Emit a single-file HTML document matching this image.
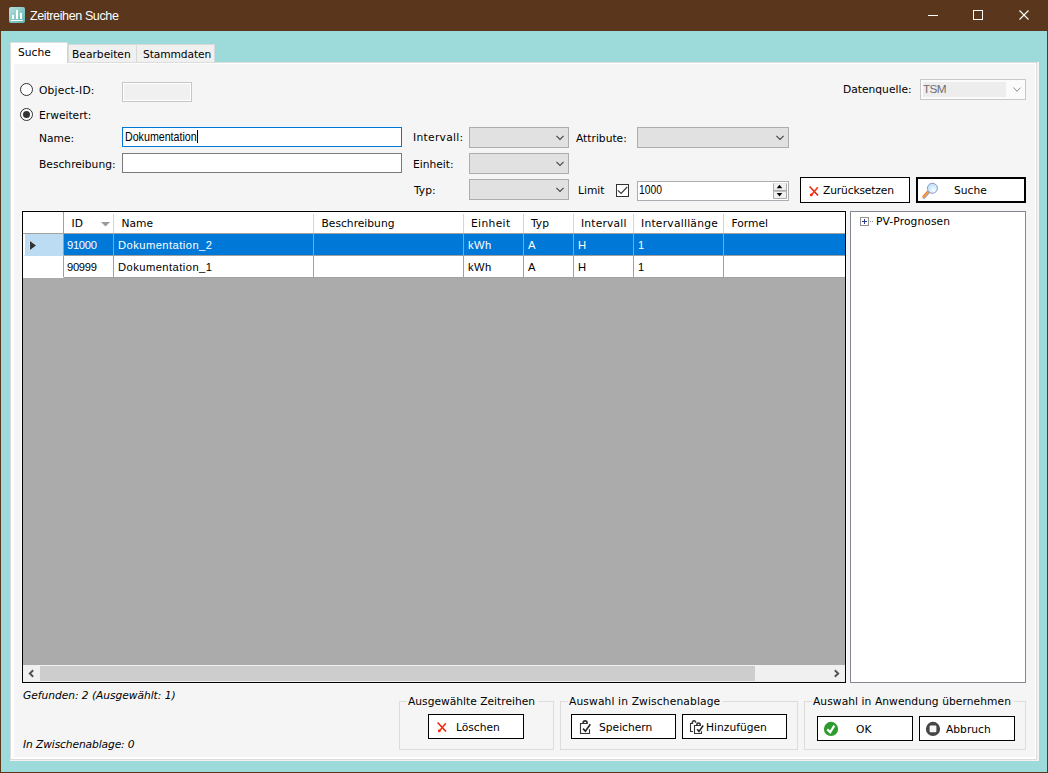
<!DOCTYPE html>
<html lang="de">
<head>
<meta charset="utf-8">
<title>Zeitreihen Suche</title>
<style>
html,body{margin:0;padding:0;}
body{width:1048px;height:773px;overflow:hidden;position:relative;background:#9ddada;
  font-family:"DejaVu Sans","Liberation Sans",sans-serif;font-size:10.7px;color:#000;}
.abs,.abs *{position:absolute;box-sizing:border-box;}
.abs{left:0;top:0;}
.t{white-space:nowrap;line-height:14px;height:14px;}
.seg{font-family:"Liberation Sans",sans-serif;}
/* window frame */
#frame{left:0;top:0;width:1048px;height:773px;border:1px solid #5a361c;border-top:none;}
#title{left:0;top:0;width:1048px;height:31px;background:#5a361c;}
#title .cap{left:30px;top:8px;color:#fff;font-size:12.6px;letter-spacing:-0.42px;line-height:17px;height:17px;}
/* tab control */
#tabpage{left:10px;top:62px;width:1029px;height:699px;background:#f4f2f2;}
#tabmid{left:10px;top:62px;width:1027px;height:698px;background:#dcdcdc;}
#tabwhite{left:11px;top:63px;width:1025px;height:696px;background:#fff;}
#tabinner{left:14px;top:64px;width:1021px;height:693px;background:#f5f5f5;}
#frame2{left:1px;top:31px;width:1046px;height:741px;border:1px solid #a6e6e6;border-top:none;}
.tab{background:#f0f0f0;border:1px solid #d9d9d9;border-bottom:none;}
.tabsel{background:#fff;}
/* inputs */
.combo{background:#e1e1e1;border:1px solid #adadad;}
.btn{background:#fff;border:1px solid #000;}
.grp{border:1px solid #dcdcdc;}
.grp .cap{background:#f5f5f5;top:-7px;padding:0 3px 0 1px;}
/* grid */
#grid{left:22px;top:211px;width:824px;height:472px;background:#ababab;border:1px solid #000;box-shadow:0 0 0 1px #fbfbfb;}
.hc{top:0;height:22px;background:#fff;border-bottom:1px solid #a6a19c;}
.hc::after{content:"";position:absolute;right:0;top:2px;width:1px;height:19px;background:#d6d6d6;}
.hc.rh{border-right:1px solid #a0a0a0;}
.hc.rh::after,.hc.last::after{display:none;}
.c{height:22px;background:#fff;border-right:1px solid #a0a0a0;border-bottom:1px solid #a0a0a0;}
.r1{top:22px;}
.r2{top:44px;}
.sel{background:#0078d7;color:#fff;}
.c .t{top:4px;left:4px;font-family:"Liberation Sans",sans-serif;font-size:11.2px;letter-spacing:0.45px;}
.hc .t{top:5px;left:7.5px;}
</style>
</head>
<body>
<div class="abs">
  <div id="frame"></div>
  <div id="title">
    <svg style="left:9px;top:7px" width="16" height="16" viewBox="0 0 16 16">
      <defs><linearGradient id="ig" x1="0" y1="0" x2="1" y2="1"><stop offset="0" stop-color="#b5e0de"/><stop offset="1" stop-color="#5db5b3"/></linearGradient></defs>
      <rect x="0" y="0" width="16" height="16" rx="2" fill="url(#ig)"/>
      <rect x="3" y="8" width="2" height="4" fill="#fff"/>
      <rect x="7" y="3" width="2" height="9" fill="#fff"/>
      <rect x="11" y="6" width="2" height="6" fill="#fff"/>
      <rect x="2" y="13" width="12" height="1" fill="#fff"/>
    </svg>
    <div class="t cap seg">Zeitreihen Suche</div>
    <svg style="left:927px;top:10px" width="110" height="12" viewBox="0 0 110 12">
      <rect x="1" y="5" width="10" height="1" fill="#fff"/>
      <rect x="46.5" y="0.5" width="9" height="9" fill="none" stroke="#fff" stroke-width="1"/>
      <path d="M92.5 0.5 L101.5 9.5 M101.5 0.5 L92.5 9.5" stroke="#fff" stroke-width="1.1" fill="none"/>
    </svg>
  </div>

  <!-- tab control -->
  <div id="tabpage"></div>
  <div id="tabmid"></div>
  <div id="tabwhite"></div>
  <div id="tabinner"></div>
  <div class="tab" style="left:68px;top:44px;width:69px;height:18px;"></div>
  <div class="tab" style="left:136px;top:44px;width:79px;height:18px;"></div>
  <div class="tab tabsel" style="left:10px;top:42px;width:58px;height:21px;border-color:#dedede #d4d4d4 #fff #dcdcdc;"></div>
  <div class="t" style="left:18px;top:46px;">Suche</div>
  <div class="t" style="left:72px;top:48px;">Bearbeiten</div>
  <div class="t" style="left:143px;top:48px;letter-spacing:-0.1px;">Stammdaten</div>

  <!-- radio buttons -->
  <svg style="left:20px;top:83px" width="13" height="13" viewBox="0 0 13 13"><circle cx="6.5" cy="6.5" r="6" fill="#fff" stroke="#333" stroke-width="1"/></svg>
  <svg style="left:20px;top:108px" width="13" height="13" viewBox="0 0 13 13"><circle cx="6.5" cy="6.5" r="6" fill="#fff" stroke="#333" stroke-width="1"/><circle cx="6.5" cy="6.5" r="3.5" fill="#333"/></svg>
  <div class="t" style="left:39px;top:84px;letter-spacing:0.2px;">Object-ID:</div>
  <div class="t" style="left:39px;top:109px;">Erweitert:</div>
  <div style="left:122px;top:82px;width:70px;height:20px;background:#f0f0f0;border:1px solid #c6c6c6;box-shadow:inset 0 0 0 1px #fff;"></div>

  <div class="t" style="left:39px;top:132px;">Name:</div>
  <div style="left:122px;top:127px;width:280px;height:20px;background:#fff;border:1px solid #0078d7;"></div>
  <div class="t seg" style="left:125px;top:130px;font-size:12.4px;transform:scaleX(0.86);transform-origin:0 0;">Dokumentation</div>
  <div style="left:197px;top:130px;width:1px;height:13px;background:#000;"></div>
  <div class="t" style="left:39px;top:158px;">Beschreibung:</div>
  <div style="left:122px;top:153px;width:280px;height:20px;background:#fff;border:1px solid #7a7a7a;"></div>

  <div class="t" style="left:413px;top:131px;letter-spacing:0.3px;">Intervall:</div>
  <div class="t" style="left:413px;top:158px;">Einheit:</div>
  <div class="t" style="left:414px;top:184px;">Typ:</div>
  <div class="combo" style="left:469px;top:127px;width:100px;height:21px;"></div>
  <div class="combo" style="left:469px;top:153px;width:100px;height:21px;"></div>
  <div class="combo" style="left:469px;top:179px;width:100px;height:21px;"></div>
  <svg style="left:555px;top:135px" width="10" height="6" viewBox="0 0 10 6"><path d="M1.4 0.8 L5 4.4 L8.6 0.8" fill="none" stroke="#444" stroke-width="1.12"/></svg>
  <svg style="left:555px;top:161px" width="10" height="6" viewBox="0 0 10 6"><path d="M1.4 0.8 L5 4.4 L8.6 0.8" fill="none" stroke="#444" stroke-width="1.12"/></svg>
  <svg style="left:555px;top:187px" width="10" height="6" viewBox="0 0 10 6"><path d="M1.4 0.8 L5 4.4 L8.6 0.8" fill="none" stroke="#444" stroke-width="1.12"/></svg>

  <div class="t" style="left:576px;top:132px;">Attribute:</div>
  <div class="combo" style="left:637px;top:127px;width:152px;height:21px;"></div>
  <svg style="left:775px;top:135px" width="10" height="6" viewBox="0 0 10 6"><path d="M1.4 0.8 L5 4.4 L8.6 0.8" fill="none" stroke="#444" stroke-width="1.12"/></svg>

  <div class="t" style="left:578px;top:184px;">Limit</div>
  <div style="left:616px;top:184px;width:13px;height:13px;background:#fff;border:1px solid #333;"></div>
  <svg style="left:616px;top:184px" width="13" height="13" viewBox="0 0 13 13"><path d="M1.8 6.3 L5.1 9.5 L11.2 3" fill="none" stroke="#3a3a3a" stroke-width="1.15"/></svg>
  <div style="left:637px;top:181px;width:152px;height:20px;background:#fff;border:1px solid #abadb3;"></div>
  <div class="t seg" style="left:639px;top:183px;font-size:12.4px;transform:scaleX(0.83);transform-origin:0 0;">1000</div>
  <div style="left:773px;top:183px;width:14px;height:8px;background:#f0f0f0;border:1px solid #adadad;border-top-color:#e8e8e8;"></div>
  <div style="left:773px;top:191px;width:14px;height:8px;background:#f0f0f0;border:1px solid #adadad;border-top-color:#c0c0c0;"></div>
  <svg style="left:776px;top:184px" width="8" height="14" viewBox="0 0 8 14"><path d="M0.7 4.2 L3.5 0.8 L6.3 4.2 Z M0.7 9 L6.3 9 L3.5 12.4 Z" fill="#000"/></svg>

  <div class="t" style="left:843px;top:83px;">Datenquelle:</div>
  <div style="left:920px;top:79px;width:106px;height:21px;background:#fbfbfb;border:1px solid #c8c8c8;"></div>
  <div style="left:923px;top:82px;width:83px;height:15px;background:#ededed;"></div>
  <div class="t seg" style="left:923px;top:82px;font-size:11.8px;color:#6d6d6d;letter-spacing:-0.6px;">TSM</div>
  <svg style="left:1012px;top:87px" width="10" height="6" viewBox="0 0 10 6"><path d="M1.4 0.6 L5 4.2 L8.6 0.6" fill="none" stroke="#888" stroke-width="1"/></svg>

  <!-- buttons top -->
  <div class="btn" style="left:800px;top:177px;width:110px;height:26px;"></div>
  <svg style="left:809px;top:186px" width="10" height="11" viewBox="0 0 10 11"><path d="M0.6 0.6 L9 9.6" stroke="#e0200a" stroke-width="1.5" fill="none"/><path d="M8.8 1.3 L2.2 9.2" stroke="#ff3414" stroke-width="1.7" fill="none"/><circle cx="2.3" cy="8.9" r="1.35" fill="#ff2200"/></svg>
  <div class="t" style="left:823px;top:184px;letter-spacing:-0.15px;">Zurücksetzen</div>
  <div class="btn" style="left:916px;top:177px;width:110px;height:26px;border-width:2px;"></div>
  <svg style="left:921px;top:181px" width="18" height="18" viewBox="0 0 18 18">
    <defs><radialGradient id="lens" cx="0.62" cy="0.68" r="0.7"><stop offset="0" stop-color="#ffffff"/><stop offset="0.45" stop-color="#d8effd"/><stop offset="1" stop-color="#bfe0f8"/></radialGradient></defs>
    <path d="M2.9 16.6 L8.1 10.9" stroke="#9a98c8" stroke-width="2.6" stroke-linecap="round"/>
    <path d="M2.3 15.9 L7.5 10.2" stroke="#f5a22e" stroke-width="2.2" stroke-linecap="round"/>
    <path d="M1.8 15.2 L6.8 9.8" stroke="#ee6a4a" stroke-width="0.9"/>
    <circle cx="11.4" cy="7.3" r="5" fill="url(#lens)" stroke="#8f96c6" stroke-width="1"/>
  </svg>
  <div class="t" style="left:954px;top:184px;">Suche</div>

  <!-- data grid -->
  <div id="grid">
    <div class="hc rh" style="left:0;width:41px;"></div>
    <div class="hc" style="left:41px;width:50px;"><div class="t">ID</div></div>
    <div class="hc" style="left:91px;width:200px;"><div class="t">Name</div></div>
    <div class="hc" style="left:291px;width:150px;"><div class="t">Beschreibung</div></div>
    <div class="hc" style="left:441px;width:60px;"><div class="t" style="left:7px;letter-spacing:0.35px;">Einheit</div></div>
    <div class="hc" style="left:501px;width:50px;"><div class="t" style="left:7px;">Typ</div></div>
    <div class="hc" style="left:551px;width:60px;"><div class="t" style="left:7px;letter-spacing:0.2px;">Intervall</div></div>
    <div class="hc" style="left:611px;width:90px;"><div class="t" style="left:7px;letter-spacing:0.25px;">Intervalllänge</div></div>
    <div class="hc last" style="left:701px;width:121px;"><div class="t">Formel</div></div>
    <svg style="left:78px;top:10px" width="9" height="5" viewBox="0 0 9 5"><path d="M0 0 L9 0 L4.5 4.5 Z" fill="#9a9a9a"/></svg>

    <div class="c r1" style="left:0;width:41px;background:#bcdcf4;border-left:2px solid #fff;border-bottom-color:#bcdcf4;"></div>
    <svg style="left:6px;top:28px" width="8" height="11" viewBox="0 0 8 11"><path d="M1 1 L7 5.5 L1 10 Z" fill="#333" stroke="#e6f2fb" stroke-width="1" paint-order="stroke"/></svg>
    <div class="c r1 sel" style="left:41px;width:50px;"><div class="t" style="left:3px;letter-spacing:-0.3px;">91000</div></div>
    <div class="c r1 sel" style="left:91px;width:200px;"><div class="t">Dokumentation_2</div></div>
    <div class="c r1 sel" style="left:291px;width:150px;"></div>
    <div class="c r1 sel" style="left:441px;width:60px;"><div class="t">kWh</div></div>
    <div class="c r1 sel" style="left:501px;width:50px;"><div class="t">A</div></div>
    <div class="c r1 sel" style="left:551px;width:60px;"><div class="t">H</div></div>
    <div class="c r1 sel" style="left:611px;width:90px;"><div class="t">1</div></div>
    <div class="c r1 sel" style="left:701px;width:121px;border-right:none;"></div>

    <div class="c r2" style="left:0;width:41px;border-bottom-color:#fff;"></div>
    <div class="c r2" style="left:41px;width:50px;"><div class="t" style="left:3px;letter-spacing:-0.3px;">90999</div></div>
    <div class="c r2" style="left:91px;width:200px;"><div class="t">Dokumentation_1</div></div>
    <div class="c r2" style="left:291px;width:150px;"></div>
    <div class="c r2" style="left:441px;width:60px;"><div class="t">kWh</div></div>
    <div class="c r2" style="left:501px;width:50px;"><div class="t">A</div></div>
    <div class="c r2" style="left:551px;width:60px;"><div class="t">H</div></div>
    <div class="c r2" style="left:611px;width:90px;"><div class="t">1</div></div>
    <div class="c r2" style="left:701px;width:121px;border-right:none;"></div>

    <!-- horizontal scrollbar -->
    <div style="left:0;top:453px;width:822px;height:17px;background:#f0f0f0;"></div>
    <div style="left:17px;top:454px;width:715px;height:15px;background:#cdcdcd;"></div>
    <svg style="left:5px;top:457px" width="7" height="9" viewBox="0 0 7 9"><path d="M5.2 1.2 L1.8 4.5 L5.2 7.8" fill="none" stroke="#505050" stroke-width="1.9"/></svg>
    <svg style="left:810px;top:457px" width="7" height="9" viewBox="0 0 7 9"><path d="M1.8 1.2 L5.2 4.5 L1.8 7.8" fill="none" stroke="#505050" stroke-width="1.9"/></svg>
  </div>

  <!-- tree -->
  <div style="left:850px;top:211px;width:176px;height:472px;background:#fff;border:1px solid #828790;"></div>
  <svg style="left:860px;top:217px" width="14" height="9" viewBox="0 0 14 9">
    <rect x="0.5" y="0.5" width="8" height="8" fill="#fff" stroke="#919191"/>
    <path d="M2 4.5 H7 M4.5 2 V7" stroke="#2b3a8c" stroke-width="1"/>
    <rect x="10" y="4" width="1" height="1" fill="#888"/><rect x="12" y="4" width="1" height="1" fill="#888"/>
  </svg>
  <div class="t" style="left:876px;top:215px;letter-spacing:0.1px;">PV-Prognosen</div>

  <!-- status -->
  <div class="t" style="left:23px;top:689px;font-style:italic;letter-spacing:-0.05px;">Gefunden: 2 (Ausgewählt: 1)</div>
  <div class="t" style="left:23px;top:738px;font-style:italic;letter-spacing:-0.12px;">In Zwischenablage: 0</div>

  <!-- group boxes -->
  <div class="grp" style="left:399px;top:701px;width:155px;height:49px;"><div class="t cap" style="left:7px;">Ausgewählte Zeitreihen</div></div>
  <div class="grp" style="left:560px;top:701px;width:238px;height:49px;"><div class="t cap" style="left:7px;letter-spacing:0.13px;">Auswahl in Zwischenablage</div></div>
  <div class="grp" style="left:804px;top:701px;width:222px;height:49px;"><div class="t cap" style="left:7px;letter-spacing:0.06px;">Auswahl in Anwendung übernehmen</div></div>

  <div class="btn" style="left:428px;top:714px;width:96px;height:25px;"></div>
  <svg style="left:437px;top:722px" width="10" height="11" viewBox="0 0 10 11"><path d="M0.6 0.6 L9 9.6" stroke="#e0200a" stroke-width="1.5" fill="none"/><path d="M8.8 1.3 L2.2 9.2" stroke="#ff3414" stroke-width="1.7" fill="none"/><circle cx="2.3" cy="8.9" r="1.35" fill="#ff2200"/></svg>
  <div class="t" style="left:456px;top:721px;">Löschen</div>

  <div class="btn" style="left:571px;top:714px;width:105px;height:25px;"></div>
  <svg style="left:579px;top:719px" width="15" height="16" viewBox="0 0 15 16">
    <path d="M8.6 4.5 H1.5 V14.5 H10.5 V10.2" fill="none" stroke="#333" stroke-width="1.1"/>
    <path d="M4 4.4 C4.1 1 8.1 1 8.2 4.4" fill="none" stroke="#333" stroke-width="1.6"/>
    <path d="M4 9.7 L6.4 12.2 L11.3 5.3" fill="none" stroke="#2a2a2a" stroke-width="1.7"/>
  </svg>
  <div class="t" style="left:599px;top:721px;">Speichern</div>

  <div class="btn" style="left:682px;top:714px;width:105px;height:25px;"></div>
  <svg style="left:689px;top:719px" width="16" height="16" viewBox="0 0 16 16">
    <path d="M4.2 4.5 H1.5 V12.5 H4" fill="none" stroke="#333" stroke-width="1.1"/>
    <path d="M3.2 4.3 C3.4 1 6.6 1 6.8 3.8" fill="none" stroke="#333" stroke-width="1.5"/>
    <path d="M11.8 6.5 H5.5 V14.5 H12.5 V12.3" fill="none" stroke="#333" stroke-width="1.1"/>
    <path d="M7.7 6.4 C7.8 3.1 11.3 3.1 11.4 6.4" fill="none" stroke="#333" stroke-width="1.5"/>
    <path d="M8.1 10.3 L10 12.4 L14.2 6.5" fill="none" stroke="#2a2a2a" stroke-width="1.6"/>
  </svg>
  <div class="t" style="left:706px;top:721px;">Hinzufügen</div>

  <div class="btn" style="left:817px;top:716px;width:96px;height:25px;"></div>
  <svg style="left:823px;top:721px" width="16" height="16" viewBox="0 0 16 16"><circle cx="8" cy="7.9" r="7.1" fill="#2e9b30"/><path d="M4.3 8.4 L7.2 11.3 L11.3 4.6" fill="none" stroke="#fff" stroke-width="2.2"/></svg>
  <div class="t" style="left:856px;top:723px;">OK</div>

  <div class="btn" style="left:919px;top:716px;width:96px;height:25px;"></div>
  <svg style="left:925px;top:721px" width="16" height="16" viewBox="0 0 16 16"><circle cx="8" cy="7.9" r="7.1" fill="#454545"/><rect x="4.9" y="4.8" width="6.2" height="6.2" rx="0.6" fill="#f4f4f6" stroke="#fff" stroke-width="0.5"/></svg>
  <div class="t" style="left:946px;top:723px;">Abbruch</div>
</div>
</body>
</html>
